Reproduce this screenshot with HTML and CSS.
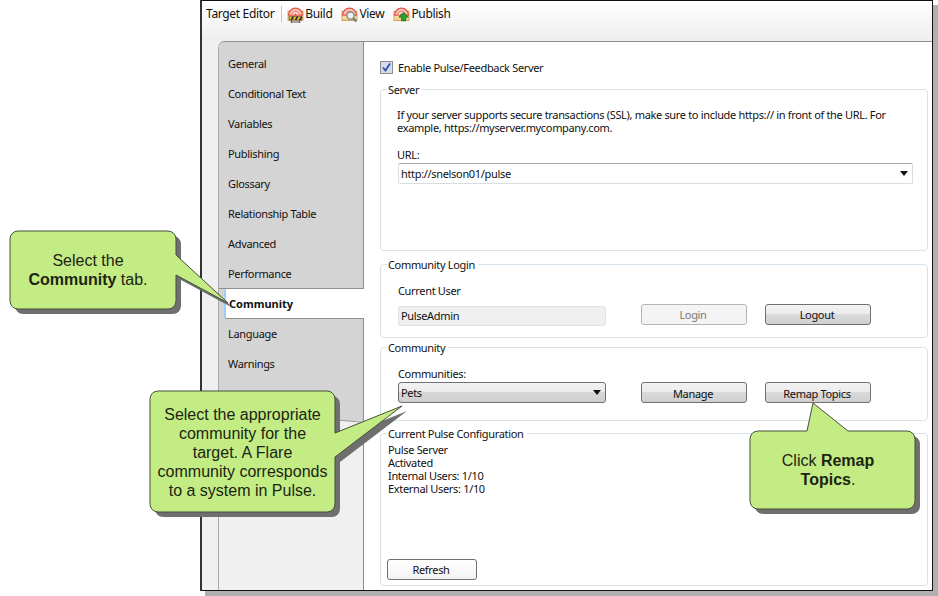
FILE: index.html
```html
<!DOCTYPE html>
<html>

<head>
    <meta charset="UTF-8">
    <title>Target Editor</title>
    <link rel="stylesheet" href="styles.css">
</head>

<body>
    <svg style="display: none;">
        <symbol id="radar" viewBox="0 0 16 16">
            <path d="M1 6h14v8.500H1z" fill="#f8d999" stroke="#cfa860"/>
            <path d="M1.500 9.500a6.500 6.500 0 0 1 13 0z" fill="#f9c9b8" stroke="#e0524a" stroke-width="1.200"/>
            <path d="M4.500 9.500a3.500 3.500 0 0 1 7 0z" fill="#fff3ea" stroke="#ee8070" stroke-width="1.200"/>
            <circle cx="8" cy="9" r="1.100" fill="#e0524a"/>
        </symbol>
    </svg>

    <div class="window">
        <div class="toolbar">
            <span class="toolbarTitle">Target Editor</span>
            <span class="toolbarSep"></span>
            <span class="toolbarItem">
                <svg class="toolIcon" viewBox="0 0 16 17">
                    <use href="#radar" width="16" height="16"/>
                    <path d="M2 11h12v3H2z" fill="#f2c230" stroke="#333" stroke-width=".6"/>
                    <path d="M4 14l2-3M8 14l2-3M12 14l2-3" stroke="#222" stroke-width="1.400"/>
                    <path d="M4 14v3M12 14v3M4 16h8" stroke="#555" fill="none"/>
                </svg>
                Build
            </span>
            <span class="toolbarItem">
                <svg class="toolIcon" viewBox="0 0 16 17">
                    <use href="#radar" width="16" height="16"/>
                    <circle cx="9" cy="10" r="3.400" fill="#eef2f4" stroke="#8a8f92" stroke-width="1.400"/>
                    <path d="M11.500 12.500l3 3" stroke="#777" stroke-width="2"/>
                </svg>
                View
            </span>
            <span class="toolbarItem">
                <svg class="toolIcon" viewBox="0 0 16 17">
                    <use href="#radar" width="16" height="16"/>
                    <path d="M10 7l4.500 4.500H12V15H8v-3.500H5.500z" fill="#2ca02c" stroke="#14701c" stroke-width=".7"/>
                </svg>
                Publish
            </span>
        </div>

        <div class="editor">
            <div class="tabs">
                <div class="tabList">
                    <div class="tab">General</div>
                    <div class="tab">Conditional Text</div>
                    <div class="tab">Variables</div>
                    <div class="tab">Publishing</div>
                    <div class="tab">Glossary</div>
                    <div class="tab">Relationship Table</div>
                    <div class="tab">Advanced</div>
                    <div class="tab tabBeforeActive">Performance</div>
                    <div class="tab tabActive">Community</div>
                    <div class="tab">Language</div>
                    <div class="tab">Warnings</div>
                </div>
                <div class="tabsEnd"></div>
            </div>

            <div class="panel">
                <label class="enableRow">
                    <span class="checkbox">
                        <svg viewBox="0 0 9 9"><path d="M1 4.500l2.500 3L8 .5" fill="none" stroke="#2f4fa8" stroke-width="1.800"/></svg>
                    </span>
                    Enable Pulse/Feedback Server
                </label>

                <fieldset class="group groupServer">
                    <legend>Server</legend>
                    <p class="groupText">If your server supports secure transactions (SSL), make sure to include https:// in front of the URL. For example, https://myserver.mycompany.com.</p>
                    <div class="fieldLabel">URL:</div>
                    <div class="urlBox">http://snelson01/pulse<span class="arrow"></span></div>
                </fieldset>

                <fieldset class="group groupLogin">
                    <legend>Community Login</legend>
                    <div class="controlRow">
                        <div class="fieldCol">
                            <div class="fieldLabel">Current User</div>
                            <div class="userBox">PulseAdmin</div>
                        </div>
                        <button class="btn btnDisabled">Login</button>
                        <button class="btn">Logout</button>
                    </div>
                </fieldset>

                <fieldset class="group groupCommunity">
                    <legend>Community</legend>
                    <div class="controlRow">
                        <div class="fieldCol">
                            <div class="fieldLabel">Communities:</div>
                            <div class="comboBox">Pets<span class="arrow"></span></div>
                        </div>
                        <button class="btn">Manage</button>
                        <button class="btn">Remap Topics</button>
                    </div>
                </fieldset>

                <fieldset class="group groupCurrent">
                    <legend>Current Pulse Configuration</legend>
                    <div class="configLines">
                        <div>Pulse Server</div>
                        <div>Activated</div>
                        <div>Internal Users: 1/10</div>
                        <div>External Users: 1/10</div>
                    </div>
                    <button class="btn btnRefresh">Refresh</button>
                </fieldset>
            </div>
        </div>
    </div>

    <svg class="calloutShapes" viewBox="0 0 938 596">
        <g class="calloutShadow" transform="translate(5 5)">
            <path d="M18 231H168a8 8 0 0 1 8 8V255L228 303 176 275V301a8 8 0 0 1-8 8H18a8 8 0 0 1-8-8V239a8 8 0 0 1 8-8z"/>
            <path d="M158 391H327a8 8 0 0 1 8 8V433L402 406 335 457V504a8 8 0 0 1-8 8H158a8 8 0 0 1-8-8V399a8 8 0 0 1 8-8z"/>
            <path d="M758 431H807L813 403 848 431H907a8 8 0 0 1 8 8V501a8 8 0 0 1-8 8H758a8 8 0 0 1-8-8V439a8 8 0 0 1 8-8z"/>
        </g>
        <g class="calloutBody">
            <path d="M18 231H168a8 8 0 0 1 8 8V255L228 303 176 275V301a8 8 0 0 1-8 8H18a8 8 0 0 1-8-8V239a8 8 0 0 1 8-8z"/>
            <path d="M158 391H327a8 8 0 0 1 8 8V433L402 406 335 457V504a8 8 0 0 1-8 8H158a8 8 0 0 1-8-8V399a8 8 0 0 1 8-8z"/>
            <path d="M758 431H807L813 403 848 431H907a8 8 0 0 1 8 8V501a8 8 0 0 1-8 8H758a8 8 0 0 1-8-8V439a8 8 0 0 1 8-8z"/>
        </g>
    </svg>

    <div class="callout calloutTab">Select the<br><b>Community</b> tab.</div>
    <div class="callout calloutCommunity">Select the appropriate community for the target. A Flare community corresponds to a system in Pulse.</div>
    <div class="callout calloutRemap">Click <b>Remap Topics</b>.</div>
</body>

</html>
```

FILE: styles.css
```css
html,
body {
    margin: 0;
    height: 100%;
    background: #fff;
    overflow: hidden;
}

body {
    position: relative;
    width: 938px;
    height: 596px;
    font-family: 'Noto Sans', sans-serif;
    font-size: 11px;
    letter-spacing: -.33px;
    color: #111;
}

.window {
    position: absolute;
    left: 200px;
    top: 0;
    width: 730px;
    height: 589px;
    display: flex;
    flex-direction: column;
    background: linear-gradient(#fff, #eee 41px, #f0f0f0 41px);
    border-top: 1px solid #111;
    border-left: 2px solid #333;
    border-right: 1px solid #111;
    border-bottom: 1px solid #111;
    box-shadow: 5px 5px 0 #b0b0b0;
}

.toolbar {
    display: flex;
    align-items: center;
    height: 25px;
    padding-left: 4px;
    flex: none;
    font-size: 12px;
}

.toolbarTitle {
    margin-right: 7px;
}

.toolbarSep {
    width: 1px;
    height: 16px;
    margin-right: 5px;
    background: #c4c4c4;
}

.toolbarItem {
    display: flex;
    align-items: center;
    gap: 1px;
    margin-right: 9px;
}

.toolIcon {
    width: 17px;
    height: 18px;
}

.editor {
    display: flex;
    flex: 1;
    min-height: 0;
    margin: 15px 0 0 16px;
    border-top: 1px solid #8e8e8e;
    border-left: 1px solid #a8a8a8;
    border-top-left-radius: 7px;
}

.tabs {
    position: relative;
    width: 144px;
    flex: none;
    border-right: 1px solid #8e8e8e;
    border-top-left-radius: 7px;
    background: linear-gradient(#d4d4d4, #d4d4d4) no-repeat 0 0 / 100% 379px;
}

.tabsEnd {
    position: absolute;
    right: 0;
    top: 378px;
    width: 40px;
    height: 1px;
    background: #9a9a9a;
    transform: rotate(5deg);
}

.tabList {
    padding-top: 7px;
}

.tab {
    height: 30px;
    line-height: 30px;
    padding-left: 9px;
    box-sizing: border-box;
}

.tabBeforeActive {
    border-bottom: 1px solid #8e8e8e;
}

.tabActive {
    position: relative;
    margin-left: 5px;
    margin-right: -1px;
    padding-left: 3px;
    line-height: 29px;
    font-weight: bold;
    letter-spacing: 0;
    background: #fff;
    border-left: 2px solid #9fcdf5;
    border-bottom: 1px solid #8e8e8e;
    border-radius: 2px 0 0 2px;
}

.panel {
    flex: 1;
    box-sizing: border-box;
    padding: 0 4px 0 16px;
    background: #fff;
}

.enableRow {
    display: flex;
    align-items: center;
    gap: 5px;
    height: 15px;
    margin-top: 18px;
}

.checkbox {
    display: flex;
    align-items: center;
    justify-content: center;
    width: 11px;
    height: 11px;
    border: 1px solid #8d8d8d;
    background: #d4dbee;
}

.checkbox svg {
    width: 9px;
    height: 9px;
}

.group {
    margin: 0;
    padding: 0 14px 0 16px;
    border: 1px solid #d8e2ea;
    border-radius: 4px;
    box-sizing: border-box;
}

.group legend {
    padding: 0 3px 0 1px;
    margin-left: -10px;
    line-height: 13px;
}

.groupServer {
    height: 168px;
    margin-top: 8px;
}

.groupLogin {
    height: 80px;
    margin-top: 7px;
}

.groupCommunity {
    height: 80px;
    margin-top: 3px;
}

.groupCurrent {
    position: relative;
    height: 159px;
    margin-top: 6px;
}

.groupText {
    margin: 12px 0 0;
    line-height: 13px;
}

.fieldLabel {
    line-height: 13px;
}

.groupServer .fieldLabel {
    margin-top: 14px;
    margin-bottom: 2px;
}

.urlBox {
    position: relative;
    height: 19px;
    margin-left: 1px;
    line-height: 19px;
    padding-left: 2px;
    border: 1px solid #d8dde2;
    border-top-color: #a8a8a8;
    border-radius: 2px;
}

.arrow {
    position: absolute;
    right: 4px;
    top: 7px;
    width: 0;
    height: 0;
    border-left: 4px solid transparent;
    border-right: 4px solid transparent;
    border-top: 5px solid #111;
}

.controlRow {
    display: flex;
    align-items: flex-end;
    gap: 18px;
}

.groupLogin .controlRow {
    padding-top: 13px;
}

.groupCommunity .controlRow {
    padding-top: 13px;
}

.fieldCol {
    width: 208px;
    margin-left: 1px;
    margin-right: 17px;
}

.groupLogin .fieldLabel {
    margin-bottom: 9px;
}

.groupLogin .btn {
    margin-bottom: 1px;
}

.groupCommunity .fieldLabel {
    margin-bottom: 2px;
}

.groupCommunity .btn {
    padding-top: 1px;
}

.userBox {
    height: 18px;
    line-height: 18px;
    padding-left: 2px;
    border: 1px solid #dfe3e6;
    background: #f0f0f0;
    border-radius: 2px;
}

.comboBox {
    position: relative;
    height: 19px;
    line-height: 19px;
    padding-left: 2px;
    border: 1px solid #707070;
    border-radius: 3px;
    background: linear-gradient(#f2f2f2 0, #ebebeb 50%, #d6d6d6 50%, #cfcfcf 100%);
}

.btn {
    width: 106px;
    height: 21px;
    padding: 0 2px 0 0;
    flex: none;
    font: inherit;
    letter-spacing: inherit;
    color: #111;
    border: 1px solid #707070;
    border-radius: 3px;
    background: linear-gradient(#f2f2f2 0, #ebebeb 50%, #dadada 50%, #cfcfcf 100%);
}

.groupLogin .btnDisabled {
    color: #777;
    border-color: #b5b5b5;
    background: #f4f4f4;
}

.configLines {
    width: fit-content;
    margin: 3px 0 0 -9px;
    line-height: 13px;
}

.btnRefresh {
    position: absolute;
    left: 6px;
    bottom: 5px;
    width: 90px;
    background: linear-gradient(#fff, #f4f4f4);
}

.calloutShapes {
    position: absolute;
    left: 0;
    top: 0;
    width: 938px;
    height: 596px;
}

.calloutShadow path {
    fill: #6f6f6f;
}

.calloutBody path {
    fill: #c3ec84;
    stroke: #46503a;
    stroke-width: 1;
}

.callout {
    position: absolute;
    box-sizing: border-box;
    font-family: 'Liberation Sans', sans-serif;
    font-size: 16px;
    line-height: 19px;
    letter-spacing: 0;
    color: #1d2412;
    text-align: center;
}

.calloutTab {
    left: 10px;
    top: 251px;
    width: 156px;
}

.calloutCommunity {
    left: 150px;
    top: 405px;
    width: 185px;
    padding: 0 6px;
}

.calloutRemap {
    left: 750px;
    top: 451px;
    width: 156px;
    padding: 0 16px;
}
```
